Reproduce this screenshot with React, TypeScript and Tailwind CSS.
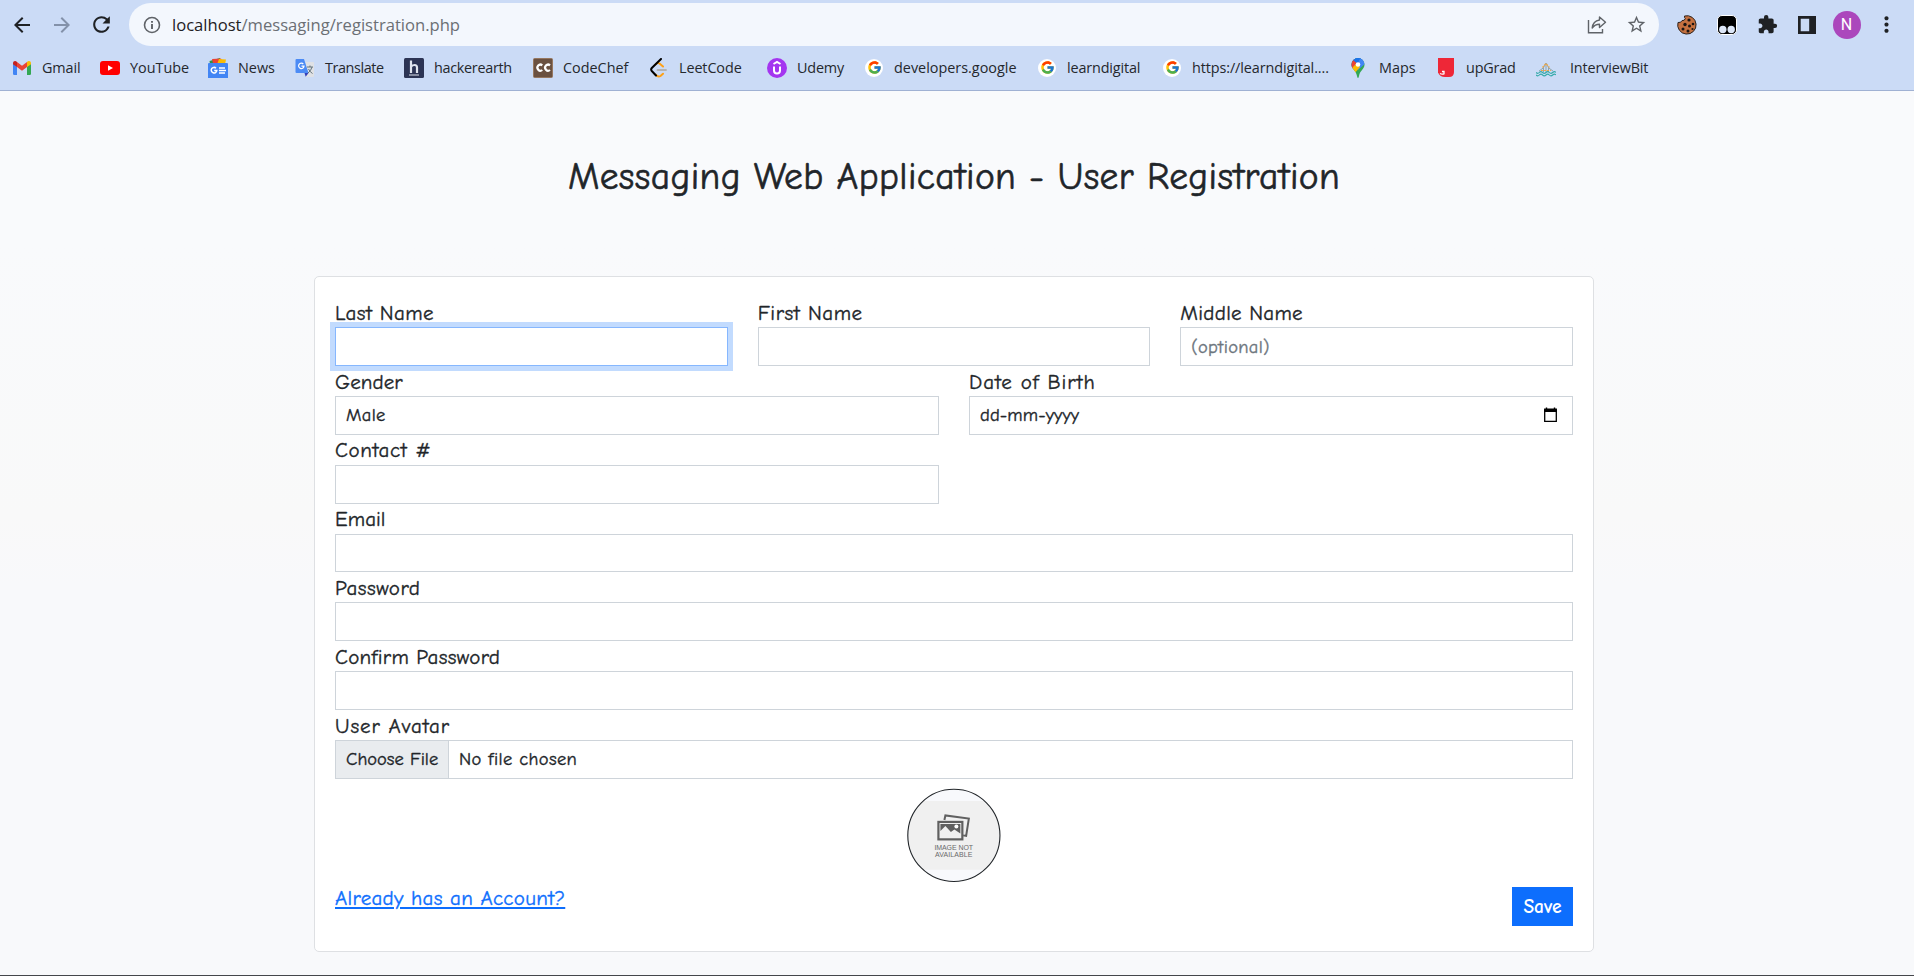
import React from "react";
import { MdArrowBack, MdArrowForward, MdExtension, MdMoreVert, MdRefresh, MdStarBorder } from "react-icons/md";
import { FcGoogle } from "react-icons/fc";

function GmailIcon() {
  return (
    <svg viewBox="0 0 18 14" className="h-[14px] w-[18px]">
      <path d="M0 2.5V12.8Q0 14 1.2 14H4V5.5z" fill="#4285f4" />
      <path d="M18 2.5V12.8Q18 14 16.800 14H14V5.500z" fill="#34a853" />
      <path d="M4 1L9 4.800 14 1V6L9 9.800 4 6z" fill="#ea4335" />
      <path d="M0 2.200C0 0 2.500-.6 4 1V6L0 3.200z" fill="#c5221f" />
      <path d="M18 2.200C18 0 15.500-.6 14 1V6L18 3.200z" fill="#fbbc04" />
    </svg>
  );
}

function YouTubeIcon() {
  return (
    <svg viewBox="0 0 20 14" className="h-[14px] w-5">
      <rect width="20" height="14" rx="3" fill="#f00" />
      <path d="M8 4.200v5.600L13 7z" fill="#fff" />
    </svg>
  );
}

function NewsIcon() {
  return (
    <svg viewBox="0 0 20 20" className="size-5">
      <path d="M1.500 3L12 0v6H2z" fill="#2d9249" />
      <path d="M4 1l9-.5 2 5H5z" fill="#ea4335" />
      <path d="M11 1l7 0.500-1 5H9z" fill="#fbbc04" />
      <path d="M0 6q0-1 1-1h18q1 0 1 1v14H0z" fill="#4285f4" />
      <path d="M8 10.200A2.800 2.800 0 1 0 8.800 12.500H6.200" fill="none" stroke="#fff" strokeWidth="1.500" />
      <path d="M11 10h6M11 12.500h7M11 15h6" stroke="#fff" strokeWidth="1.500" />
    </svg>
  );
}

function TranslateIcon() {
  return (
    <svg viewBox="0 0 20 20" className="size-5">
      <path d="M8 4h10q1 0 1 1v13q0 1-1 1h-7z" fill="#dfe1e5" />
      <path d="M9.500 15h4l-2.800 3.700z" fill="#3540b8" />
      <path d="M1.500 1H9l4.500 14h-12Q.5 15 .5 14V2q0-1 1-1z" fill="#4c8bf5" />
      <path d="M8.300 6A2.700 2.700 0 1 0 9 8.200H6.500" fill="none" stroke="#fff" strokeWidth="1.200" />
      <path d="M12 9h6M15 7.500V9M17 9q-1 4-4 6M13.500 11q1.500 3 4 4.500" fill="none" stroke="#65747c" strokeWidth="1" />
    </svg>
  );
}

function HackerEarthIcon() {
  return (
    <svg viewBox="0 0 20 20" className="size-5">
      <rect width="20" height="20" rx="1.500" fill="#2c3454" />
      <path d="M7 2.500V15M7 9q1-2 3.500-2T13 9.500V15" fill="none" stroke="#dfe4ee" strokeWidth="2.200" />
      <path d="M5 17h10" stroke="#dfe4ee" strokeWidth="1" />
    </svg>
  );
}

function CodeChefIcon() {
  return (
    <svg viewBox="0 0 20 20" className="size-5">
      <rect x=".5" y=".5" width="19" height="19" rx="1" fill="#6b5140" stroke="#96775f" />
      <path d="M9.300 7.300A3 3 0 1 0 9.300 12M17 7.300A3 3 0 1 0 17 12" fill="none" stroke="#fff" strokeWidth="2.200" />
    </svg>
  );
}

function LeetCodeIcon() {
  return (
    <svg viewBox="0 0 20 20" className="size-5">
      <path d="M6.500 6.500q2-2.500 4-1l3.500 3M6.500 16.500q2.500 3 5 1.500l2.500-2.300" fill="none" stroke="#ffa116" strokeWidth="2" strokeLinecap="round" />
      <path d="M12 1L2.800 10q-1.300 1.500 0 3L7 17.500" fill="none" stroke="#000" strokeWidth="2" strokeLinecap="round" />
      <path d="M8.500 12H17" stroke="#b3b3b3" strokeWidth="1.900" strokeLinecap="round" />
    </svg>
  );
}

function UdemyIcon() {
  return (
    <svg viewBox="0 0 20 20" className="size-5">
      <circle cx="10" cy="10" r="10" fill="#a435f0" />
      <path d="M6.500 6L10 4l3.500 2M7 8.500v4q0 3 3 3t3-3v-4" fill="none" stroke="#fff" strokeWidth="2" />
    </svg>
  );
}

function GoogleIcon() {
  return (
    <span className="flex size-[18px] items-center justify-center rounded-full bg-white">
      <FcGoogle className="size-[15px]" />
    </span>
  );
}

function MapsIcon() {
  return (
    <svg viewBox="0 0 20 20" className="size-5">
      <clipPath id="pin">
        <path d="M9 0a6.500 6.500 0 0 1 6.500 6.700c0 4-4.700 6-5.500 11.300q-.3 2-1 2t-1-2C7.200 12.700 2.500 10.700 2.500 6.700A6.500 6.500 0 0 1 9 0z" />
      </clipPath>
      <g clipPath="url(#pin)">
        <path d="M0 0h20v20H0z" fill="#34a853" />
        <path d="M0 14L16 0V-2H0z" fill="#1a73e8" />
        <path d="M10 0h8v4L9 12z" fill="#4285f4" />
        <path d="M0 0h4l4 5-5 6H0z" fill="#ea4335" />
        <path d="M2 11l6-6 3 4-6 7z" fill="#fbbc04" />
        <path d="M5 0h7L7.500 5 4 2z" fill="#1a73e8" />
      </g>
      <circle cx="9" cy="6.500" r="2.300" fill="#fff" />
    </svg>
  );
}

function UpGradIcon() {
  return (
    <svg viewBox="0 0 20 20" className="size-5">
      <path d="M2 0h16v14q0 5-5 5H9q-5 0-7-4.500z" fill="#ee2737" />
      <path d="M4 15.500q2 1 4 .3v-2.300H6" fill="none" stroke="#fff" strokeWidth="1.300" />
    </svg>
  );
}

function InterviewBitIcon() {
  return (
    <svg viewBox="0 0 20 20" className="-ml-2 size-5">
      <path d="M3 13Q8 11 10 5q2 6 7 8M7.500 9.500V14M10 5v9M12.500 9.500V14" fill="none" stroke="#8fa5ae" strokeWidth="1" />
      <path d="M6.500 9.500L10 5.500l3.500 4M5 12.500h10" fill="none" stroke="#f0a848" strokeWidth="1.200" strokeDasharray="2 1" />
      <path d="M0 14.500q1.700 1.800 3.300 0t3.300 0 3.400 0 3.300 0 3.400 0 3.300 0M0 17q1.700 1.800 3.300 0t3.300 0 3.400 0 3.300 0 3.400 0 3.300 0" fill="none" stroke="#35aaaa" strokeWidth="1.100" />
    </svg>
  );
}

const bookmarks = [
  { label: "Gmail", icon: <GmailIcon />, box: "w-[88px] tracking-[-0.100px]" },
  { label: "YouTube", icon: <YouTubeIcon />, box: "w-[108px]" },
  { label: "News", icon: <NewsIcon />, box: "w-[87px]" },
  { label: "Translate", icon: <TranslateIcon />, box: "w-[109px] tracking-[-0.400px]" },
  { label: "hackerearth", icon: <HackerEarthIcon />, box: "w-[129px] tracking-[-0.300px]" },
  { label: "CodeChef", icon: <CodeChefIcon />, box: "w-[116px]" },
  { label: "LeetCode", icon: <LeetCodeIcon />, box: "w-[118px] tracking-[-0.100px]" },
  { label: "Udemy", icon: <UdemyIcon />, box: "w-[97px] tracking-[-0.200px]" },
  { label: "developers.google", icon: <GoogleIcon />, box: "w-[173px]" },
  { label: "learndigital", icon: <GoogleIcon />, box: "w-[125px] tracking-[-0.150px]" },
  { label: "https://learndigital....", icon: <GoogleIcon />, box: "w-[187px] tracking-[-0.100px]" },
  { label: "Maps", icon: <MapsIcon />, box: "w-[87px]" },
  { label: "upGrad", icon: <UpGradIcon />, box: "w-[104px] tracking-[-0.200px]" },
  { label: "InterviewBit", icon: <InterviewBitIcon />, box: "w-[120px] tracking-[-0.150px]" },
];

function CookieIcon() {
  return (
    <svg viewBox="0 0 20 20" className="size-5">
      <path d="M7.500 1q-.3 2 .8 2.600Q7.500 6 5 5.600 4 8 1 7.500A9.200 9.200 0 1 0 7.500 1z" fill="#c4703f" stroke="#2b2320" strokeWidth="1" />
      <g fill="#1c1513">
        <circle cx="12" cy="5" r="1.600" />
        <circle cx="16" cy="9" r="1.300" />
        <circle cx="8" cy="9.500" r="1.700" />
        <circle cx="12.500" cy="11" r="1.500" />
        <circle cx="6" cy="14" r="1.500" />
        <circle cx="11" cy="16" r="1.500" />
        <circle cx="15.500" cy="14" r="1.100" />
      </g>
    </svg>
  );
}

function MaskIcon() {
  return (
    <svg viewBox="0 0 20 20" className="size-5">
      <rect x=".5" y=".5" width="19" height="19" rx="4.500" fill="#000" stroke="#fff" />
      <circle cx="5.800" cy="14.500" r="3.700" fill="#dce6f7" />
      <circle cx="14.200" cy="14.500" r="3.700" fill="#dce6f7" />
    </svg>
  );
}

function BrowserBar() {
  return (
    <header className="h-[91px] border-b border-[#a0b1d3] bg-[#cbdbf6] font-['Open_Sans',sans-serif]">
      <div className="flex h-[46px] items-center pt-[3px] text-[#1f2124]">
        <MdArrowBack className="ml-[9.500px] size-6" />
        <MdArrowForward className="ml-4 size-6 text-[#8391a9]" />
        <MdRefresh className="ml-[15.500px] size-[25px]" />
        <div className="ml-[15px] flex h-[43px] w-[1530px] items-center rounded-full bg-[#f3f7fd] pr-3">
          <svg viewBox="0 0 18 18" className="ml-[13.500px] size-[18px]">
            <circle cx="9" cy="9" r="7.500" fill="none" stroke="#5f6368" strokeWidth="1.600" />
            <path d="M9 8v5M9 5v1.800" stroke="#5f6368" strokeWidth="1.900" />
          </svg>
          <span className="ml-[11.500px] pt-px text-[16.600px] text-[#6b6f74]">
            <span className="text-[#1f2124]">localhost</span>/messaging/registration.php
          </span>
          <svg viewBox="0 0 20 20" className="ml-auto mr-[19px] size-5 text-[#5f6368]">
            <path d="M1.500 5v12.700h14V14" fill="none" stroke="currentColor" strokeWidth="1.400" />
            <path d="M12.500 2l6 5.200-6 5.300V9.300Q8 9.300 5.200 13 6 6 12.500 5z" fill="none" stroke="currentColor" strokeWidth="1.400" strokeLinejoin="round" />
          </svg>
          <MdStarBorder className="size-[21px] text-[#5f6368]" />
        </div>
        <div className="ml-[18px] flex items-center">
          <CookieIcon />
          <span className="ml-5"><MaskIcon /></span>
          <MdExtension className="ml-[19.500px] size-[21px]" />
          <svg viewBox="0 0 18 18" className="ml-[20px] size-[18px]">
            <path d="M0 0h18v18H0zM2.700 2.700v12.600h8.500V2.700z" fill="currentColor" fillRule="evenodd" />
          </svg>
          <span className="ml-[17px] flex size-7 items-center justify-center rounded-full bg-[#ab47bc] font-['Roboto',sans-serif] text-base text-white">N</span>
          <MdMoreVert className="ml-[13px] size-[25px]" />
        </div>
      </div>
      <nav className="flex h-11 items-center pl-3 text-[14.400px] text-[#25282d]">
        {bookmarks.map((b) => (
          <a key={b.label} className={`flex shrink-0 items-center gap-[10px] whitespace-nowrap ${b.box}`}>
            <span className="flex w-5 shrink-0 justify-center">{b.icon}</span>
            {b.label}
          </a>
        ))}
      </nav>
    </header>
  );
}

const inputBox = "flex h-[38.875px] w-full items-center border border-[#ced4da] bg-white text-[18.500px] tracking-[0.300px]";

type FieldProps = { label: string; spacing?: string; children?: React.ReactNode; focused?: boolean };

function Field({ label, spacing = "", children, focused = false }: FieldProps) {
  return (
    <div>
      <div className={`h-[30px] pt-[0.800px] leading-[30px] ${spacing}`}>{label}</div>
      <div className={focused ? "h-[38.875px] w-full border border-[#86b7fe] bg-white shadow-[0_0_0_5px_#c2dbfe]" : inputBox}>{children}</div>
    </div>
  );
}

function AvatarPlaceholder() {
  return (
    <svg viewBox="0 0 94 94" className="mx-auto mt-[9.500px] block h-[93.750px] w-[93.750px] overflow-visible">
      <clipPath id="avatar"><circle cx="47" cy="46.500" r="46" /></clipPath>
      <circle cx="47" cy="46.500" r="46.200" fill="#f8f9fc" />
      <rect y="12" width="94" height="69" fill="#f0f0f0" clipPath="url(#avatar)" />
      <circle cx="47" cy="46.500" r="46.200" fill="none" stroke="#212529" strokeWidth="1.100" />
      <path d="M37.500 31l1-4.500 23.500 3.200-2.700 17.300-3-.5" fill="none" stroke="#606060" strokeWidth="2" />
      <rect x="31.500" y="33" width="24" height="17.500" fill="#f0f0f0" stroke="#606060" strokeWidth="2.200" />
      <path d="M33.500 35h20v9.500l-6-4-3.500 2.500-5.500-6-5 5z" fill="#606060" />
      <circle cx="49.500" cy="37.700" r="2" fill="#fff" />
      <g fill="#6a6a6a" textAnchor="middle" className="font-['Liberation_Sans',sans-serif] text-[7px]" stroke="none">
        <text x="47" y="61" textLength="39">IMAGE NOT</text>
        <text x="47" y="68.500" textLength="38">AVAILABLE</text>
      </g>
    </svg>
  );
}

export default function App() {
  return (
    <div className="flex h-[976px] w-[1914px] flex-col overflow-hidden border-b border-[#44474b] bg-[linear-gradient(180deg,#f9fafc_25%,#f9f9f9_53%,#f8f9fb_60%)]">
      <BrowserBar />
      <main className="flex flex-col items-center pr-[6px] font-['Comic_Sans_MS','Comic_Neue','Open_Sans',sans-serif] text-[21px] tracking-[0.300px] text-[#212529] [-webkit-text-stroke:0.350px]">
        <h1 className="mt-[61px] h-[50px] text-[37.500px] leading-[50px] tracking-[0.370px] [-webkit-text-stroke:0.600px]">Messaging Web Application - User Registration</h1>
        <form className="mt-[73.950px] h-[676px] w-[1280px] rounded-[5px] border border-[#dee0e3] bg-white px-5 pt-5">
          <div className="grid grid-cols-3 gap-x-[30px]">
            <Field label="Last Name" spacing="tracking-[0.400px]" focused />
            <Field label="First Name" spacing="tracking-[0.550px]" />
            <Field label="Middle Name"><span className="pl-[10px] pt-[3px] text-[#6c757d]">(optional)</span></Field>
          </div>
          <div className="grid grid-cols-2 gap-x-[30px]">
            <Field label="Gender" spacing="tracking-[0.100px]"><span className="pl-[10px] pt-px">Male</span></Field>
            <Field label="Date of Birth" spacing="tracking-[0.950px]">
              <span className="pl-[10px] pt-px tracking-[0.100px]">dd-mm-yyyy</span>
              <svg viewBox="0 0 15 16" className="ml-auto mr-[14px] h-4 w-[15px]">
                <path d="M3.500 0.500v3M11.500 0.500v3" stroke="#000" strokeWidth="1.400" />
                <path d="M1.700 3h11.600v11.300H1.700z" fill="none" stroke="#000" strokeWidth="1.300" />
                <path d="M1.100 1.500h12.800V5H1.100z" fill="#000" />
              </svg>
            </Field>
            <Field label="Contact #" spacing="tracking-[0.650px]" />
          </div>
          <Field label="Email" spacing="tracking-[0.050px]" />
          <Field label="Password" spacing="tracking-[0.500px]" />
          <Field label="Confirm Password" />
          <Field label="User Avatar" spacing="tracking-[0.900px]">
            <span className="flex h-full w-[113px] shrink-0 items-center whitespace-nowrap border-r border-[#ced4da] bg-[#e9ecef] pl-[10px] tracking-[0.020px]">Choose File</span>
            <span className="pl-[10px] tracking-[0.400px]">No file chosen</span>
          </Field>
          <AvatarPlaceholder />
          <div className="flex items-start justify-between">
            <a className="pt-[0.800px] leading-[30px] text-[#0d6efd] underline decoration-2 underline-offset-2">Already has an Account?</a>
            <span className="mt-[5px] flex h-[39px] w-[61px] items-center justify-center bg-[#0d6efd] text-[19.500px] font-semibold tracking-normal text-white [-webkit-text-stroke:0]">Save</span>
          </div>
        </form>
      </main>
    </div>
  );
}
